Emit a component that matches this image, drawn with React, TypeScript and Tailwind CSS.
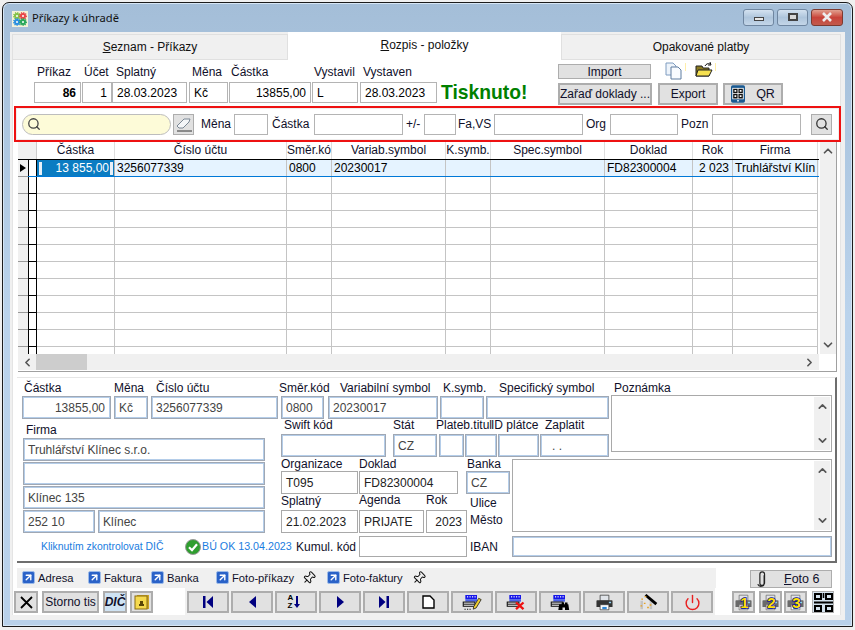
import React from 'react';
import { ArrowUpRight, ChevronDown, ChevronLeft, ChevronRight, ChevronUp, Pin, Power, Search } from 'lucide-react';

type FieldProps = { className?: string; kind?: 'plain' | 'blue' | 'top'; children?: React.ReactNode };

const fieldKinds = {
  plain: 'border border-[#a9a9a9] text-[#222]',
  blue: 'border border-[#a0a8b4] shadow-[inset_0_0_0_1px_#b4cde9] text-[#444]',
  top: 'border border-[#b4b4b4] text-black',
};

function Field({ className = '', kind = 'blue', children }: FieldProps) {
  return <div className={`flex items-center shrink-0 bg-white px-[4px] overflow-hidden whitespace-nowrap ${fieldKinds[kind]} ${className}`}>{children}</div>;
}

function Label({ className = '', children }: { className?: string; children: React.ReactNode }) {
  return <div className={`whitespace-nowrap text-[#10102a] ${className}`}>{children}</div>;
}

function Btn({ className = '', children }: { className?: string; children?: React.ReactNode }) {
  return <div className={`flex items-center justify-center shrink-0 bg-[#e1e1e1] border-2 border-[#adadad] ${className}`}>{children}</div>;
}

function ScrollStrip() {
  return (
    <div className="ml-auto w-[16px] my-[1px] mr-[1px] bg-[#f0f0f0] flex flex-col justify-between items-center py-[3px] text-[#555]">
      <ChevronUp size={13} strokeWidth={3} />
      <ChevronDown size={13} strokeWidth={3} />
    </div>
  );
}

function TableGlyph({ children }: { children?: React.ReactNode }) {
  return (
    <svg width="20" height="17" viewBox="0 0 24 20">
      <rect x="4" y="1" width="14" height="5" fill="#1616e8" />
      <rect x="6" y="2.5" width="1.4" height="1.4" fill="#fff" />
      <rect x="9" y="2.5" width="1.4" height="1.4" fill="#fff" />
      <rect x="12" y="2.5" width="1.4" height="1.4" fill="#fff" />
      <rect x="15" y="2.5" width="1.4" height="1.4" fill="#fff" />
      <rect x="4" y="6" width="14" height="3" fill="#4a62e8" />
      <rect x="1.5" y="9.5" width="14" height="5" fill="#fff" stroke="#111" strokeWidth="1.3" />
      <line x1="1.5" y1="12" x2="15" y2="12" stroke="#111" strokeWidth="1.3" />
      {children}
    </svg>
  );
}

function PrinterGlyph({ size = 26, dark = '#333' }: { size?: number; dark?: string }) {
  return (
    <svg width={size} height={size} viewBox="0 0 26 26">
      <path d="M7 3h12v8H7z" fill="#dfe3e8" stroke={dark} />
      <path d="M3 10h20a1 1 0 0 1 1 1v8H2v-8a1 1 0 0 1 1-1z" fill={dark} />
      <path d="M7 16h12v7H7z" fill="#fff" stroke={dark} />
      <rect x="10" y="19" width="6" height="3" fill="#2f86d6" />
      <rect x="19" y="12" width="3" height="2" fill="#8fd0f0" />
    </svg>
  );
}

function NumberPrinter({ n }: { n: string }) {
  return (
    <Btn className="relative w-[23px] h-[22px] overflow-hidden">
      <PrinterGlyph size={21} dark="#6a6a6a" />
      <span className="absolute inset-0 pl-[2px] flex items-center justify-center font-bold text-[15px] leading-none text-[#ffe000] [paint-order:stroke_fill] [-webkit-text-stroke:1.6px_#14148c]">{n}</span>
    </Btn>
  );
}

function LinkItem({ className = '', children }: { className?: string; children: React.ReactNode }) {
  return (
    <div className={`flex items-center gap-[3px] shrink-0 ${className}`}>
      <span className="w-[13px] h-[13px] flex items-center justify-center rounded-[2px] bg-[#2a62c8] border border-[#9dbbe8]">
        <ArrowUpRight size={11} strokeWidth={3} color="#fff" />
      </span>
      <span className="text-[#10102a]">{children}</span>
    </div>
  );
}

function QrMark() {
  return (
    <svg width="19" height="19" viewBox="0 0 19 19" fill="#000">
      <path d="M0 0h8v7H0zM2 2v3h4V2zM11 0h8v7h-8zM13 2v3h4V2zM0 12h8v7H0zM2 14v3h4v-3zM11 12h8v7h-8zM13 14v3h4v-3z" fillRule="evenodd" />
      <rect x="0" y="8.5" width="19" height="2" />
      <rect x="8.7" y="0" width="1.6" height="5" />
    </svg>
  );
}

const columns = [
  { w: 'w-[78px]', title: 'Částka', value: '', cell: '' },
  { w: 'w-[172px]', title: 'Číslo účtu', value: '3256077339', cell: 'pl-[2px]' },
  { w: 'w-[45px]', title: 'Směr.kó', value: '0800', cell: 'pl-[2px]' },
  { w: 'w-[114px]', title: 'Variab.symbol', value: '20230017', cell: 'pl-[2px]' },
  { w: 'w-[45px]', title: 'K.symb.', value: '', cell: '' },
  { w: 'w-[114px]', title: 'Spec.symbol', value: '', cell: '' },
  { w: 'w-[88px]', title: 'Doklad', value: 'FD82300004', cell: 'pl-[2px]' },
  { w: 'w-[40px]', title: 'Rok', value: '2 023', cell: 'pr-[3px] text-right' },
  { w: 'w-[85px]', title: 'Firma', value: 'Truhlářství Klín', cell: 'pl-[2px]' },
];

const emptyRows = Array.from({ length: 11 }, (_, i) => i);

function Grid() {
  return (
    <div className="ml-[5px] w-[819px] h-[230px] flex flex-col border-r border-b border-[#a0a0a0] text-black">
      <div className="flex h-[212px]">
        <div className="w-[801px] overflow-hidden">
          <div className="flex h-[18px] border-b border-black">
            <div className="w-[19px] bg-[#f0f0f0] border-r border-[#ccc]" />
            {columns.map((c) => (
              <div key={c.title} className={`${c.w} text-center overflow-hidden whitespace-nowrap border-r border-[#dedede] leading-[17px] text-[#10102a] flex justify-center`}>
                {c.title}
              </div>
            ))}
          </div>
          <div className="flex h-[17px] border-b border-[#0078d7] bg-[#e5f3ff]">
            <div className="w-[10px] bg-[#f0f0f0] flex items-center justify-center border-b border-[#999] -mb-[1px]">
              <span className="w-0 h-0 border-y-[4px] border-y-transparent border-l-[6px] border-l-black" />
            </div>
            <div className="w-[9px] bg-white border-x border-black" />
            <div className="w-[78px] bg-[#0a7cc2] text-white text-right flex items-center justify-between pl-[2px] pr-[1px] border-r border-[#b0b0b0]">
              <span className="w-[3px] h-[13px] bg-[#e8f0f8]" />
              <span className="flex-1 pr-[1px] leading-[16px]">13 855,00</span>
              <span className="w-[3px] h-[13px] bg-[#e8f0f8]" />
            </div>
            {columns.slice(1).map((c) => (
              <div key={c.title} className={`${c.w} ${c.cell} overflow-hidden whitespace-nowrap border-r border-[#c4c4c4] leading-[16px]`}>
                {c.value}
              </div>
            ))}
          </div>
          {emptyRows.map((r) => (
            <div key={r} className="flex h-[17px]">
              <div className="w-[10px] bg-[#f0f0f0] border-b border-[#999]" />
              <div className="w-[9px] border-x border-b border-black" />
              {columns.map((c) => (
                <div key={c.title} className={`${c.w} border-r border-b border-[#c4c4c4]`} />
              ))}
            </div>
          ))}
        </div>
        <div className="w-[16px] ml-[1px] bg-[#f0f0f0] flex flex-col justify-between items-center py-[2px] text-[#555]">
          <ChevronUp size={14} strokeWidth={3} />
          <ChevronDown size={14} strokeWidth={3} />
        </div>
      </div>
      <div className="flex h-[16px] w-[801px] bg-[#f0f0f0] items-center text-[#555] pr-[3px]">
        <ChevronLeft size={13} strokeWidth={3} className="ml-[3px]" />
        <div className="ml-[2px] w-[51px] h-full bg-[#cdcdcd]" />
        <ChevronRight size={13} strokeWidth={3} className="ml-auto" />
      </div>
    </div>
  );
}

function Detail() {
  return (
    <div className="ml-[4px] mt-[5px] w-[820px] h-[186px] bg-white border-t border-[#e6e6e6] border-r-2 border-r-[#6e6e6e] border-b-2 border-b-[#6e6e6e] pl-[5px] pt-[3px]">
      <div className="flex">
        {/* cast, mena, ucet a firma */}
        <div className="w-[259px] shrink-0">
          <div className="flex gap-[3px]">
            <div className="w-[89px]">
              <Label className="h-[15px] leading-[15px] pl-[2px]">Částka</Label>
              <Field className="w-[89px] h-[23px] justify-end !pr-[5px]">13855,00</Field>
            </div>
            <div className="w-[34px]">
              <Label className="h-[15px] leading-[15px]">Měna</Label>
              <Field className="w-[34px] h-[23px]">Kč</Field>
            </div>
            <div className="w-[127px]">
              <Label className="h-[15px] leading-[15px] pl-[5px]">Číslo účtu</Label>
              <Field className="w-[127px] h-[23px]">3256077339</Field>
            </div>
          </div>
          <Label className="h-[19px] leading-[15px] pl-[4px] pt-[4px]">Firma</Label>
          <div className="ml-[1px] flex flex-col gap-[1px]">
            <Field className="w-[242px] h-[23px]">Truhlářství Klínec s.r.o.</Field>
            <Field className="w-[242px] h-[23px]" />
            <Field className="w-[242px] h-[23px]">Klínec 135</Field>
            <div className="flex gap-[3px]">
              <Field className="w-[72px] h-[23px]">252 10</Field>
              <Field className="w-[167px] h-[23px]">Klínec</Field>
            </div>
          </div>
        </div>
        <div>
          <div className="flex">
            <div className="w-[330px] shrink-0">
              <div className="flex">
                <div className="w-[43px]">
                  <Label className="h-[15px] leading-[15px] -ml-[2px]">Směr.kód</Label>
                  <Field className="w-[43px] h-[23px]">0800</Field>
                </div>
                <div className="ml-[4px] w-[110px]">
                  <Label className="h-[15px] leading-[15px] pl-[12px]">Variabilní symbol</Label>
                  <Field className="w-[110px] h-[23px]">20230017</Field>
                </div>
                <div className="ml-[2px] w-[44px]">
                  <Label className="h-[15px] leading-[15px] pl-[3px]">K.symb.</Label>
                  <Field className="w-[44px] h-[23px]" />
                </div>
                <div className="ml-[2px] w-[123px]">
                  <Label className="h-[15px] leading-[15px] pl-[13px]">Specifický symbol</Label>
                  <Field className="w-[123px] h-[23px]" />
                </div>
              </div>
              <div className="flex">
                <div className="w-[105px]">
                  <Label className="h-[15px] leading-[13px] pl-[3px]">Swift kód</Label>
                  <Field className="w-[105px] h-[23px]" />
                </div>
                <div className="ml-[7px] w-[44px]">
                  <Label className="h-[15px] leading-[13px]">Stát</Label>
                  <Field className="w-[44px] h-[23px]">CZ</Field>
                </div>
                <div className="ml-[2px] w-[25px]">
                  <Label className="h-[15px] leading-[13px] -ml-[3px]">Plateb.titul</Label>
                  <Field className="w-[25px] h-[23px]" />
                </div>
                <div className="ml-[1px] w-[32px]">
                  <Field className="w-[32px] h-[23px] mt-[15px]" />
                </div>
                <div className="ml-[1px] w-[41px]">
                  <Label className="h-[15px] leading-[13px] -ml-[7px]">ID plátce</Label>
                  <Field className="w-[41px] h-[23px]" />
                </div>
                <div className="ml-[1px] w-[69px]">
                  <Label className="h-[15px] leading-[13px] pl-[5px]">Zaplatit</Label>
                  <Field className="w-[69px] h-[23px] !pl-[11px]">. .</Field>
                </div>
              </div>
            </div>
            <div className="w-[221px]">
              <Label className="h-[14px] leading-[14px] pl-[3px]">Poznámka</Label>
              <div className="flex w-[221px] h-[57px] border border-[#a9a9a9] bg-white">
                <ScrollStrip />
              </div>
            </div>
          </div>
          <div className="flex mt-[1px]">
            <div className="w-[231px] shrink-0">
              <div className="flex">
                <div className="w-[77px]">
                  <Label className="h-[13px] leading-[12px]">Organizace</Label>
                  <Field kind="plain" className="w-[77px] h-[23px]">T095</Field>
                </div>
                <div className="ml-[1px] w-[99px]">
                  <Label className="h-[13px] leading-[12px]">Doklad</Label>
                  <Field kind="plain" className="w-[99px] h-[23px]">FD82300004</Field>
                </div>
                <div className="ml-[8px] w-[44px]">
                  <Label className="h-[13px] leading-[13px] pl-[1px]">Banka</Label>
                  <Field className="w-[44px] h-[23px]">CZ</Field>
                </div>
              </div>
              <div className="flex">
                <div className="w-[77px]">
                  <Label className="h-[16px] leading-[15px]">Splatný</Label>
                  <Field kind="plain" className="w-[77px] h-[23px]">21.02.2023</Field>
                </div>
                <div className="ml-[1px] w-[65px]">
                  <Label className="h-[16px] leading-[13px]">Agenda</Label>
                  <Field kind="plain" className="w-[65px] h-[23px]">PRIJATE</Field>
                </div>
                <div className="ml-[2px] w-[41px]">
                  <Label className="h-[16px] leading-[13px]">Rok</Label>
                  <Field kind="plain" className="w-[41px] h-[23px] justify-end">2023</Field>
                </div>
                <div className="ml-[3px] pt-[1px]">
                  <Label className="h-[17px] leading-[17px]">Ulice</Label>
                  <Label className="h-[17px] leading-[17px]">Město</Label>
                </div>
              </div>
            </div>
            <div className="flex w-[320px] h-[73px] mt-[1px] border border-[#a9a9a9] bg-white">
              <ScrollStrip />
            </div>
          </div>
        </div>
      </div>
      <div className="flex items-center h-[21px] mt-[3px]">
        <span className="ml-[19px] w-[125px] text-[10.4px] text-[#1a7ce0] whitespace-nowrap">Kliknutím zkontrolovat DIČ</span>
        <svg width="16" height="16" viewBox="0 0 16 16" className="ml-[19px]">
          <circle cx="8" cy="8" r="7.5" fill="#2f9e2f" stroke="#9a9a9a" />
          <path d="M4 8.2l3 3 5-6" fill="none" stroke="#fff" strokeWidth="2.2" />
        </svg>
        <span className="ml-[1px] w-[94px] text-[10.7px] text-[#1a7ce0] whitespace-nowrap">BÚ OK 13.04.2023</span>
        <Label className="w-[63px]">Kumul. kód</Label>
        <Field kind="plain" className="w-[108px] h-[21px]" />
        <Label className="ml-[3px] w-[42px]">IBAN</Label>
        <Field className="w-[320px] h-[21px]" />
      </div>
    </div>
  );
}

function BottomBars() {
  return (
    <>
      <div className="flex mt-[5px] h-[20px]">
        <div className="ml-[4px] w-[699px] bg-[#f0f0f0] flex items-center text-[11.2px]">
          <LinkItem className="ml-[5px] w-[66px]">Adresa</LinkItem>
          <LinkItem className="w-[63px]">Faktura</LinkItem>
          <LinkItem className="w-[65px]">Banka</LinkItem>
          <LinkItem className="w-[86px]">Foto-příkazy</LinkItem>
          <Pin size={14} strokeWidth={1.7} className="rotate-45 shrink-0" color="#111" />
          <LinkItem className="ml-[11px] w-[85px]">Foto-faktury</LinkItem>
          <Pin size={14} strokeWidth={1.7} className="rotate-45 shrink-0" color="#111" />
        </div>
        <div className="ml-[34px] mt-[2px] w-[82px] h-[18px] bg-[#e1e1e1] border border-[#adadad] flex items-center text-[#10102a]">
          <svg width="10" height="16" viewBox="0 0 9 15" className="ml-[6px]" fill="none" stroke="#222" strokeWidth="1.1">
            <path d="M6.5 4v7.5a2 2 0 0 1-4 0V3a2.2 2.2 0 0 1 4.4 0v8.5a3.4 3.4 0 0 1-6.4 1" />
          </svg>
          <span className="ml-[17px] text-[12.5px]"><u>F</u>oto 6</span>
        </div>
      </div>
      <div className="flex h-[28px]">
        <div className="flex w-[172px] pt-[3px] pl-[1px]">
          <Btn className="w-[24px] h-[22px]">
            <svg width="15" height="15" viewBox="0 0 15 15"><path d="M2 2l11 11M13 2L2 13" stroke="#000" strokeWidth="1.8" /></svg>
          </Btn>
          <Btn className="ml-[4px] w-[57px] h-[22px] text-[12px] text-[#10102a]">Storno tis</Btn>
          <Btn className="ml-[4px] w-[24px] h-[22px] !bg-[#cfe3f3] font-bold italic text-[12px] text-[#10102a]">DIČ</Btn>
          <Btn className="ml-[3px] w-[23px] h-[22px]">
            <svg width="16" height="16" viewBox="0 0 16 16">
              <rect x="3" y="1" width="12" height="14" fill="#c9a227" />
              <rect x="1" y="2" width="12" height="13" fill="#f5d94e" stroke="#8a6d10" />
              <path d="M6 7h3v3H6zM5 10h5v2H5z" fill="#5a4608" />
            </svg>
          </Btn>
        </div>
        <div className="w-[530px] bg-[#f0f0f0] flex gap-[2px] pl-[2px] pt-[3px]">
          <Btn className="w-[42px] h-[22px]">
            <svg width="12" height="14" viewBox="0 0 12 14" fill="#000080"><rect x="1" y="1" width="2.5" height="12" /><path d="M11 1v12L4.5 7z" /></svg>
          </Btn>
          <Btn className="w-[42px] h-[22px]">
            <svg width="9" height="14" viewBox="0 0 9 14" fill="#000080"><path d="M8 1v12L1 7z" /></svg>
          </Btn>
          <Btn className="w-[42px] h-[22px]">
            <span className="flex flex-col font-bold text-[8px] leading-[8px] text-black -ml-[4px]"><span>A</span><span>Z</span></span>
            <svg width="6" height="14" viewBox="0 0 6 14" className="ml-[1px]" fill="#000080"><rect x="2" y="1" width="2" height="9" /><path d="M0 9h6l-3 4z" /></svg>
          </Btn>
          <Btn className="w-[42px] h-[22px]">
            <svg width="9" height="14" viewBox="0 0 9 14" fill="#000080"><path d="M1 1v12l7-6z" /></svg>
          </Btn>
          <Btn className="w-[42px] h-[22px]">
            <svg width="12" height="14" viewBox="0 0 12 14" fill="#000080"><path d="M1 1v12l6.5-6z" /><rect x="8.5" y="1" width="2.5" height="12" /></svg>
          </Btn>
          <Btn className="w-[42px] h-[22px]">
            <svg width="13" height="14" viewBox="0 0 13 14"><path d="M1 1h7l4 4v8H1z" fill="#fff" stroke="#000" strokeWidth="1.4" /></svg>
          </Btn>
          <Btn className="w-[42px] h-[22px]">
            <TableGlyph>
              <path d="M14 15l6-10 3 1.5-6 10-3.5 1.5z" fill="#f0d030" stroke="#222" strokeWidth="1" />
              <path d="M3 18h1.4M6 18h1.4M9 18h1.4" stroke="#111" strokeWidth="1.3" />
            </TableGlyph>
          </Btn>
          <Btn className="w-[42px] h-[22px]">
            <TableGlyph>
              <path d="M12 10l9 8M21 10l-9 8" stroke="#ee1111" strokeWidth="2.8" />
            </TableGlyph>
          </Btn>
          <Btn className="w-[42px] h-[22px]">
            <TableGlyph>
              <path d="M11 12h3v-2h3v2h1v-2h3v2h1l1 7h-5v-3h-3v3h-5z" fill="#000" />
            </TableGlyph>
          </Btn>
          <Btn className="w-[42px] h-[22px]"><PrinterGlyph size={19} /></Btn>
          <Btn className="w-[42px] h-[22px] overflow-hidden">
            <svg width="20" height="17" viewBox="0 0 24 20">
              <rect x="3" y="8" width="14" height="10" fill="#c4c4c4" />
              <rect x="6" y="5" width="8" height="14" fill="#e4e4e4" />
              <path d="M9 1l13 11" stroke="#000" strokeWidth="3.4" />
              <path d="M4 6h2M7 11h2M3 14h2M11 16h2M14 13h2M8 3h2" stroke="#e8a020" strokeWidth="1.6" />
            </svg>
          </Btn>
          <Btn className="w-[42px] h-[22px]"><Power size={17} color="#e82020" strokeWidth={2} /></Btn>
        </div>
        <div className="flex pt-[3px] ml-[17px]">
          <NumberPrinter n="1" />
          <div className="ml-[4px]"><NumberPrinter n="2" /></div>
          <div className="ml-[2px]"><NumberPrinter n="3" /></div>
          <Btn className="ml-[5px] w-[22px] h-[22px] !bg-[#d4e2ee] !border"><QrMark /></Btn>
        </div>
      </div>
    </>
  );
}

export default function App() {
  return (
    <div className="w-[855px] h-[630px] bg-[#f0f0f0] pl-[2px] pt-[2px] font-['Liberation_Sans',Arial,sans-serif] text-[12px] overflow-hidden">
      <div className="w-[851px] h-[625px] border border-[#1c1c1c] rounded-t-[7px] shadow-[inset_0_0_0_1px_#d6e6f5] bg-gradient-to-b from-[#a4bed8] via-[#bad3ec] to-[#b9d1ea] flex flex-col px-[7px] pb-[6px]">
        {/* titulek okna */}
        <div className="h-[29px] flex items-center shrink-0">
          <svg width="16" height="16" viewBox="0 0 16 16" className="ml-[2px] mt-[2px] bg-[#f6f2d8]">
            <circle cx="5" cy="5" r="3" fill="#84c34a" stroke="#84c34a" strokeDasharray="1 1" strokeWidth="2" />
            <circle cx="11" cy="5" r="3" fill="#e8484a" stroke="#e8484a" strokeDasharray="1 1" strokeWidth="2" />
            <circle cx="5" cy="11" r="3" fill="#2a8fe0" stroke="#2a8fe0" strokeDasharray="1 1" strokeWidth="2" />
            <circle cx="11" cy="11" r="3" fill="#2aa85a" stroke="#2aa85a" strokeDasharray="1 1" strokeWidth="2" />
            <circle cx="5" cy="5" r="1" fill="#fff" />
            <circle cx="11" cy="5" r="1" fill="#fff" />
            <circle cx="5" cy="11" r="1" fill="#fff" />
            <circle cx="11" cy="11" r="1" fill="#fff" />
          </svg>
          <span className="ml-[4px] mt-[1px] font-['Noto_Sans',sans-serif] text-[11.2px] text-[#111]">Příkazy k úhradě</span>
          <div className="ml-auto flex gap-[3px] -mt-[1px] mr-[2px]">
            <div className="w-[31px] h-[17px] rounded-[3px] border border-[#6f86a0] bg-gradient-to-b from-[#d4e2f0] via-[#aec5dc] to-[#c4d6e8] flex items-center justify-center">
              <span className="w-[10px] h-[4px] mt-[3px] bg-[#e8e8e8] border border-[#444]" />
            </div>
            <div className="w-[31px] h-[17px] rounded-[3px] border border-[#6f86a0] bg-gradient-to-b from-[#d4e2f0] via-[#aec5dc] to-[#c4d6e8] flex items-center justify-center">
              <span className="w-[10px] h-[8px] bg-[#d8d8d8] border-2 border-[#444]" />
            </div>
            <div className="w-[32px] h-[17px] rounded-[3px] border border-[#7d3a30] bg-gradient-to-b from-[#e0a090] via-[#c8433a] to-[#c25a4c] flex items-center justify-center">
              <svg width="12" height="10" viewBox="0 0 12 10"><path d="M2 1l8 8M10 1L2 9" stroke="#eee" strokeWidth="2.6" /></svg>
            </div>
          </div>
        </div>

        <div className="flex-1 bg-[#f0f0f0] px-[2px] pt-[2px]">
          {/* zalozky */}
          <div className="flex h-[26px] text-[#111]">
            <div className="w-[276px] bg-[#f0f0f0] border border-[#e0e0e0] flex items-center justify-center"><span><u>S</u>eznam - Příkazy</span></div>
            <div className="w-[273px] -mt-[2px] h-[28px] bg-white flex items-center justify-center pb-[2px]"><span><u>R</u>ozpis - položky</span></div>
            <div className="w-[280px] bg-[#f0f0f0] border border-[#e0e0e0] flex items-center justify-center"><span>Opakované platby</span></div>
          </div>

          <div className="w-[829px] h-[555px] bg-white border-l border-[#e4e4e4] border-r">
            {/* hlavicka prikazu */}
            <div className="flex h-[46px] pl-[21px]">
              <div className="flex pt-[5px] w-[401px]">
                <div className="w-[47px]"><Label className="h-[17px] leading-[15px] pl-[3px]">Příkaz</Label><Field kind="top" className="w-[47px] h-[21px] justify-end font-bold text-[#1c1ca8]">86</Field></div>
                <div className="ml-[1px] w-[30px]"><Label className="h-[17px] leading-[15px] pl-[2px]">Účet</Label><Field kind="top" className="w-[30px] h-[21px] justify-end">1</Field></div>
                <div className="w-[75px]"><Label className="h-[17px] leading-[15px] pl-[4px]">Splatný</Label><Field kind="top" className="w-[75px] h-[21px]">28.03.2023</Field></div>
                <div className="ml-[2px] w-[39px]"><Label className="h-[17px] leading-[15px] pl-[3px]">Měna</Label><Field kind="top" className="w-[39px] h-[21px]">Kč</Field></div>
                <div className="ml-[1px] w-[82px]"><Label className="h-[17px] leading-[15px] pl-[2px]">Částka</Label><Field kind="top" className="w-[82px] h-[21px] justify-end">13855,00</Field></div>
                <div className="ml-[1px] w-[46px]"><Label className="h-[17px] leading-[15px] pl-[2px]">Vystavil</Label><Field kind="top" className="w-[46px] h-[21px]">L</Field></div>
                <div className="ml-[2px] w-[77px]"><Label className="h-[17px] leading-[15px] pl-[3px]">Vystaven</Label><Field kind="top" className="w-[77px] h-[21px]">28.03.2023</Field></div>
              </div>
              <div className="w-[123px] pl-[6px] pt-[21px] font-bold text-[19.3px] leading-[24px] text-[#008000] whitespace-nowrap">Tisknuto!</div>
              <div className="pt-[4px]">
                <div className="flex h-[15px]">
                  <Btn className="w-[93px] h-[15px] text-[#10102a] !border">Import</Btn>
                  <svg width="18" height="18" viewBox="0 0 18 18" className="ml-[14px] -mt-[2px]">
                    <path d="M1 1h7l3 3v9H1z" fill="#eef4fb" stroke="#7f9cc0" />
                    <path d="M6 5h7l3 3v9H6z" fill="#f8fbff" stroke="#5f7ca0" />
                  </svg>
                  <span className="ml-[2px] -mt-[1px] w-[1px] h-[8px] bg-[#ffeeaa]" />
                  <svg width="18" height="16" viewBox="0 0 18 16" className="ml-[9px] -mt-[2px]">
                    <path d="M1 4h6l1 2h6v8H1z" fill="#8a7a20" stroke="#222" />
                    <path d="M3 8h14l-3 6H1z" fill="#f5e050" stroke="#222" />
                    <path d="M10 4c1-2 3-3 5-2M15 0l1 3-3 0" fill="none" stroke="#111" />
                  </svg>
                  <span className="ml-[2px] -mt-[1px] w-[1px] h-[8px] bg-[#ffeeaa]" />
                </div>
                <div className="flex mt-[4px]">
                  <Btn className="w-[94px] h-[22px] text-[#10102a] text-[12px] whitespace-nowrap">Zařaď doklady ...</Btn>
                  <Btn className="ml-[6px] w-[60px] h-[22px] text-[#10102a]">Export</Btn>
                  <Btn className="ml-[5px] w-[60px] h-[22px] text-[#10102a] text-[12.5px]">
                    <svg width="14" height="18" viewBox="0 0 16 20" className="mr-[11px]">
                      <rect x="0" y="0" width="16" height="20" rx="2" fill="#1a5a92" />
                      <rect x="1.5" y="3" width="13" height="13" fill="#fff" />
                      <path d="M2.5 4h5v5h-5zM8.5 4h5v5h-5zM2.5 10h5v5h-5zM8.5 10h5v5h-5z" fill="#111" />
                      <path d="M4 5.5h2v2H4zM10 5.5h2v2h-2zM4 11.5h2v2H4zM10 11.5h2v2h-2z" fill="#fff" />
                      <rect x="7" y="17" width="2" height="1.5" fill="#fff" />
                    </svg>
                    QR
                  </Btn>
                </div>
              </div>
            </div>

            {/* filtr */}
            <div className="ml-[1px] w-[827px] h-[36px] border-2 border-[#ee1111] bg-white shadow-[inset_0_0_0_1px_#eeeeee] flex items-center pl-[6px] text-[#10102a]">
              <div className="w-[149px] h-[21px] rounded-full bg-[#fdfbd8] border border-[#bdbdbd] flex items-center pl-[4px]">
                <Search size={14} strokeWidth={2.2} color="#444" />
              </div>
              <Btn className="ml-[2px] w-[21px] h-[21px] !border">
                <svg width="18" height="16" viewBox="0 0 18 16">
                  <path d="M2 10l7-7h6l-1 3-6 6H4z" fill="#f4f6f8" stroke="#7a8794" />
                  <path d="M2 15h15" stroke="#333" />
                </svg>
              </Btn>
              <span className="ml-[7px] w-[33px]">Měna</span>
              <div className="w-[34px] h-[21px] border border-[#b4b4b4]" />
              <span className="ml-[4px] w-[42px]">Částka</span>
              <div className="w-[89px] h-[21px] border border-[#b4b4b4]" />
              <span className="ml-[3px] w-[18px]">+/-</span>
              <div className="w-[32px] h-[21px] border border-[#b4b4b4]" />
              <span className="ml-[2px] w-[36px]">Fa,VS</span>
              <div className="w-[89px] h-[21px] border border-[#b4b4b4]" />
              <span className="ml-[3px] w-[24px]">Org</span>
              <div className="w-[68px] h-[21px] border border-[#b4b4b4]" />
              <span className="ml-[3px] w-[31px]">Pozn</span>
              <div className="w-[89px] h-[21px] border border-[#b4b4b4]" />
              <Btn className="ml-[10px] w-[21px] h-[21px] !border">
                <Search size={14} strokeWidth={2.2} color="#333" />
              </Btn>
            </div>

            <Grid />
            <Detail />
            <BottomBars />
          </div>
        </div>
      </div>
    </div>
  );
}
